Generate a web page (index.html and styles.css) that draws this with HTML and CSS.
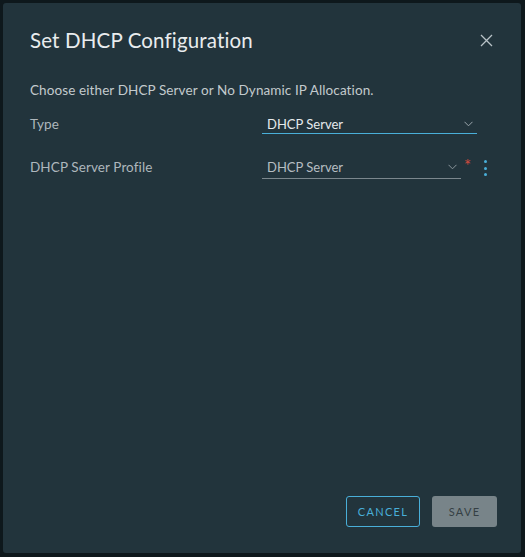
FILE: index.html
```html
<!DOCTYPE html>
<html>
<head>
<meta charset="utf-8">
<link rel="stylesheet" href="styles.css">
</head>
<body>
<div class="modal">
  <div class="header">
    <h1 class="title">Set DHCP Configuration</h1>
    <button class="close" aria-label="Close">
      <svg width="13" height="13" viewBox="0 0 13 13"><path d="M1 1L12 12M12 1L1 12" stroke="#b8c2c7" stroke-width="1.3" fill="none"/></svg>
    </button>
  </div>
  <div class="body">
    <p class="desc">Choose either DHCP Server or No Dynamic IP Allocation.</p>
    <div class="row row-type">
      <label class="label">Type</label>
      <div class="select active">
        <span class="value">DHCP Server</span>
        <svg class="chev" width="9" height="6" viewBox="0 0 9 6"><path d="M0.5 0.8L4.5 4.8L8.5 0.8" stroke="#9aa6ac" stroke-width="1" fill="none"/></svg>
      </div>
    </div>
    <div class="row row-profile">
      <label class="label">DHCP Server Profile</label>
      <div class="control">
        <div class="select inactive">
          <span class="value dim">DHCP Server</span>
          <svg class="chev" width="9" height="6" viewBox="0 0 9 6"><path d="M0.5 0.8L4.5 4.8L8.5 0.8" stroke="#8a969c" stroke-width="1" fill="none"/></svg>
        </div>
        <span class="req">*</span>
        <span class="more"><i></i><i></i><i></i></span>
      </div>
    </div>
  </div>
  <div class="footer">
    <button class="btn btn-outline">CANCEL</button>
    <button class="btn btn-disabled">SAVE</button>
  </div>
</div>
</body>
</html>
```

FILE: styles.css
```css
html, body {
  margin: 0;
  padding: 0;
  background: #0e181c;
  width: 525px;
  height: 557px;
  overflow: hidden;
}
body {
  font-family: Lato, "Noto Sans", sans-serif;
  padding: 3px 4px 4px 3px;
  box-sizing: border-box;
}
.modal {
  width: 518px;
  height: 550px;
  background: #22343c;
  border-radius: 3px;
  box-sizing: border-box;
  padding: 25px 24px 26px 27px;
  display: flex;
  flex-direction: column;
}
.header {
  display: flex;
  align-items: center;
  justify-content: space-between;
  height: 24px;
}
.title {
  margin: 0;
  font-weight: 400;
  font-size: 20.5px;
  line-height: 24px;
  color: #e9ecee;
  letter-spacing: 0.15px;
}
.close {
  background: none;
  border: 0;
  padding: 0;
  margin-right: 4px;
  width: 13px;
  height: 13px;
  display: flex;
}
.body {
  flex: 1;
  padding-top: 29px;
}
.desc {
  margin: 0;
  font-size: 13.5px;
  line-height: 18px;
  letter-spacing: 0.1px;
  color: #c3cacd;
}
.row {
  display: grid;
  grid-template-columns: 232px 1fr;
  align-items: start;
}
.row-type { margin-top: 16px; }
.row-profile { margin-top: 24px; }
.label {
  font-size: 13.5px;
  line-height: 18px;
  letter-spacing: 0.1px;
  color: #aeb7bc;
}
.select {
  display: flex;
  align-items: center;
  justify-content: space-between;
  padding: 0 4px 0 5px;
  box-sizing: border-box;
}
.select.active {
  width: 215px;
  height: 19px;
  border-bottom: 1px solid #49afd9;
}
.select.inactive {
  width: 199px;
  height: 21px;
  padding-bottom: 2px;
  border-bottom: 1px solid #7b878d;
}
.value {
  font-size: 13px;
  line-height: 18px;
  color: #e6eaec;
}
.value.dim { color: #b6bec2; }
.control {
  display: flex;
  align-items: flex-start;
}
.req {
  font-size: 17px;
  line-height: 17px;
  margin-left: 3px;
  margin-top: -1px;
  color: #d24b3e;
}
.more {
  display: flex;
  flex-direction: column;
  gap: 3.5px;
  margin-left: 13px;
  margin-top: 2px;
}
.more i {
  display: block;
  width: 3px;
  height: 3px;
  border-radius: 50%;
  background: #49afd9;
}
.footer {
  display: flex;
  justify-content: flex-end;
  gap: 12px;
}
.btn {
  height: 31px;
  border-radius: 3px;
  font-family: Lato, "Noto Sans", sans-serif;
  font-size: 11px;
  letter-spacing: 1.3px;
  padding: 0;
  box-sizing: border-box;
}
.btn-outline {
  width: 74px;
  background: transparent;
  border: 1px solid #49afd9;
  color: #49afd9;
}
.btn-disabled {
  width: 65px;
  background: #788489;
  border: 0;
  color: #353f44;
}
```
